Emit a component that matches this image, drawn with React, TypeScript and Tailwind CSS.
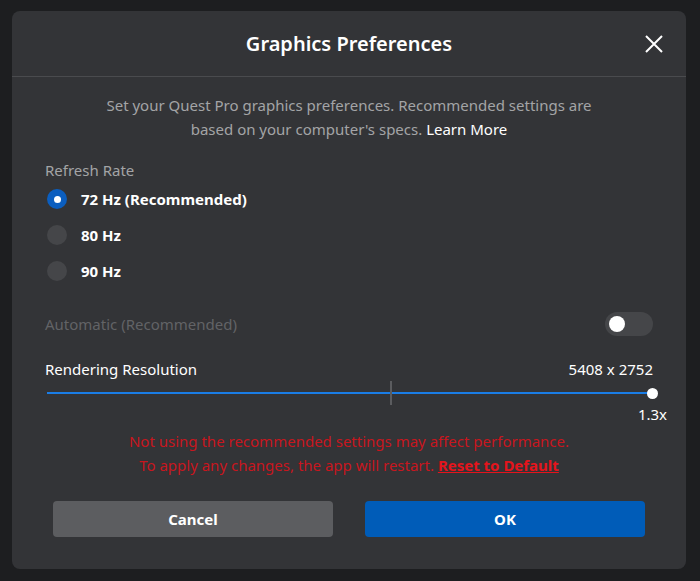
import { useState } from "react";

const rates = ["72 Hz (Recommended)", "80 Hz", "90 Hz"];

const Radio = ({ checked }: { checked: boolean }) =>
  checked ? (
    <span className="w-5 h-5 rounded-full bg-[#0b5ebf] flex items-center justify-center shrink-0">
      <span className="w-[7px] h-[7px] rounded-full bg-white" />
    </span>
  ) : (
    <span className="w-5 h-5 rounded-full bg-[#454649] shrink-0" />
  );

export default function App() {
  const [rate, setRate] = useState(0);

  return (
    <div
      className="w-[700px] h-[581px] bg-[#1d1e20] pt-[11px] pl-[12px] text-white"
      style={{ fontFamily: '"Noto Sans", "Open Sans", sans-serif' }}
    >
      <div className="w-[674px] h-[558px] bg-[#333437] rounded-lg flex flex-col">
        {/* header */}
        <div className="relative h-[66px] border-b border-[#4a4b4e] flex items-center justify-center">
          <h1 className="text-[20px] font-semibold">Graphics Preferences</h1>
          <button className="absolute right-[23px] top-[24px] w-[18px] h-[18px]">
            <svg viewBox="0 0 18 18" className="w-[18px] h-[18px]" fill="none" stroke="white" strokeWidth="2">
              <path d="M1 1L17 17M17 1L1 17" />
            </svg>
          </button>
        </div>

        <div className="px-[33px] pt-[16px] flex flex-col text-[15px] leading-6">
          <p className="text-center text-[#a3a4a6]">
            Set your Quest Pro graphics preferences. Recommended settings are
            <br />
            based on your computer's specs. <span className="text-white">Learn More</span>
          </p>

          <p className="mt-[17px] text-[#a3a4a6]">Refresh Rate</p>
          <div className="flex flex-col -mt-px">
            {rates.map((r, i) => (
              <label
                key={r}
                className="h-9 flex items-center gap-[14px] pl-[2px] cursor-pointer"
                onClick={() => setRate(i)}
              >
                <Radio checked={rate === i} />
                <span className="font-bold">{r}</span>
              </label>
            ))}
          </div>

          <div className="mt-[23px] h-6 flex items-center justify-between">
            <span className="text-[#626366]">Automatic (Recommended)</span>
            <span className="w-12 h-6 rounded-full bg-[#454649] flex items-center pl-1">
              <span className="w-4 h-4 rounded-full bg-white" />
            </span>
          </div>

          <div className="mt-[21px] flex justify-between">
            <span>Rendering Resolution</span>
            <span>5408 x 2752</span>
          </div>

          <div className="relative h-6 ml-[2px] flex items-center">
            <div className="w-full h-[2px] bg-[#1a7de6]" />
            <div className="absolute left-[343px] top-0 w-[2px] h-6 bg-[#5b5c5f]" />
            <div className="absolute -right-[5px] top-[7px] w-[11px] h-[11px] rounded-full bg-white" />
            <span className="absolute -right-[14px] top-[21px] text-[15px]">1.3x</span>
          </div>

          <div className="mt-[24px] text-center text-[#c8161e]">
            <p>Not using the recommended settings may affect performance.</p>
            <p>
              To apply any changes, the app will restart.{" "}
              <a className="font-bold text-[#e5141c] underline">Reset to Default</a>
            </p>
          </div>
        </div>

        <div className="mt-auto mb-8 px-[41px] flex gap-8">
          <button className="flex-1 h-9 rounded bg-[#5c5d60] text-[15px] font-bold">Cancel</button>
          <button className="flex-1 h-9 rounded bg-[#005cb8] text-[15px] font-bold">OK</button>
        </div>
      </div>
    </div>
  );
}
